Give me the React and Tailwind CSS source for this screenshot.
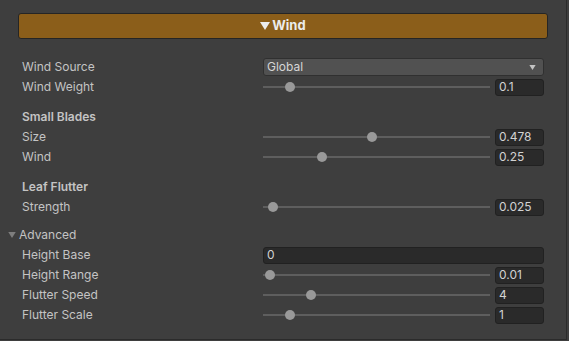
import React from "react";

const font = { fontFamily: "Inter, 'Noto Sans', 'Liberation Sans', sans-serif" };

const Tri = ({ className }) => (
  <svg viewBox="0 0 10 8" className={className} fill="currentColor">
    <path d="M0 0 H10 L5 8 Z" />
  </svg>
);

const Label = ({ children, bold }) => (
  <div className={`w-[241px] shrink-0 text-[12px] text-[#c4c4c4] ${bold ? "font-semibold" : ""}`}>{children}</div>
);

const Row = ({ children, className = "" }) => (
  <div className={`flex h-5 items-center pl-[22px] pr-[22px] ${className}`}>{children}</div>
);

const NumberField = ({ value, wide }) => (
  <div
    className={`flex h-[17px] items-center rounded-[3px] border border-[#212121] bg-[#2a2a2a] px-[3px] text-[12px] text-[#d2d2d2] ${
      wide ? "flex-1" : "w-[49px] shrink-0"
    }`}
  >
    {value}
  </div>
);

const Slider = ({ value, max = 1 }) => {
  const pct = value / max;
  return (
    <div className="flex flex-1 items-center gap-[5px]">
      <div className="relative h-5 flex-1">
        <div className="absolute left-0 right-0 top-[9px] h-[2px] bg-[#5e5e5e]" />
        <div
          className="absolute top-[5px] h-[10px] w-[10px] rounded-full bg-[#999999]"
          style={{ left: `calc(${pct} * (100% - 10px))` }}
        />
      </div>
      <NumberField value={String(value)} />
    </div>
  );
};

const SliderRow = ({ label, value, max }) => (
  <Row>
    <Label>{label}</Label>
    <Slider value={value} max={max} />
  </Row>
);

export default function App() {
  return (
    <div className="h-[341px] w-[569px] bg-[#3e3e3e]" style={font}>
      <div className="h-[340px] w-[567px] border-b border-r border-[#2b2b2b] pt-[13px]">
        <div className="mx-[18px] flex h-[26px] items-center justify-center gap-[2px] rounded-[3px] border border-[#252525] bg-[#8b5e1a] text-[13px] font-bold text-[#ececec]">
          <Tri className="h-[8px] w-[10px]" />
          <span>Wind</span>
        </div>

        <div className="mt-[18px]">
          <Row>
            <Label>Wind Source</Label>
            <div className="flex h-[18px] flex-1 items-center justify-between rounded-[3px] border border-[#303030] bg-[#515151] pl-[3px] pr-[7px] text-[12px] text-[#d6d6d6]">
              <span>Global</span>
              <Tri className="h-[5px] w-[7px] text-[#c4c4c4]" />
            </div>
          </Row>
          <SliderRow label="Wind Weight" value={0.1} />
        </div>

        <div className="mt-[10px]">
          <Row>
            <Label bold>Small Blades</Label>
          </Row>
          <SliderRow label="Size" value={0.478} />
          <SliderRow label="Wind" value={0.25} />
        </div>

        <div className="mt-[10px]">
          <Row>
            <Label bold>Leaf Flutter</Label>
          </Row>
          <SliderRow label="Strength" value={0.025} />
        </div>

        <div className="mt-[8px]">
          <div className="flex h-5 items-center gap-[3px] pl-[8px] text-[12px] text-[#c4c4c4]">
            <Tri className="h-[6px] w-[8px] text-[#7e7e7e]" />
            <span>Advanced</span>
          </div>
          <Row>
            <Label>Height Base</Label>
            <NumberField value="0" wide />
          </Row>
          <SliderRow label="Height Range" value={0.01} />
          <SliderRow label="Flutter Speed" value={4} max={20} />
          <SliderRow label="Flutter Scale" value={1} max={10} />
        </div>
      </div>
    </div>
  );
}
